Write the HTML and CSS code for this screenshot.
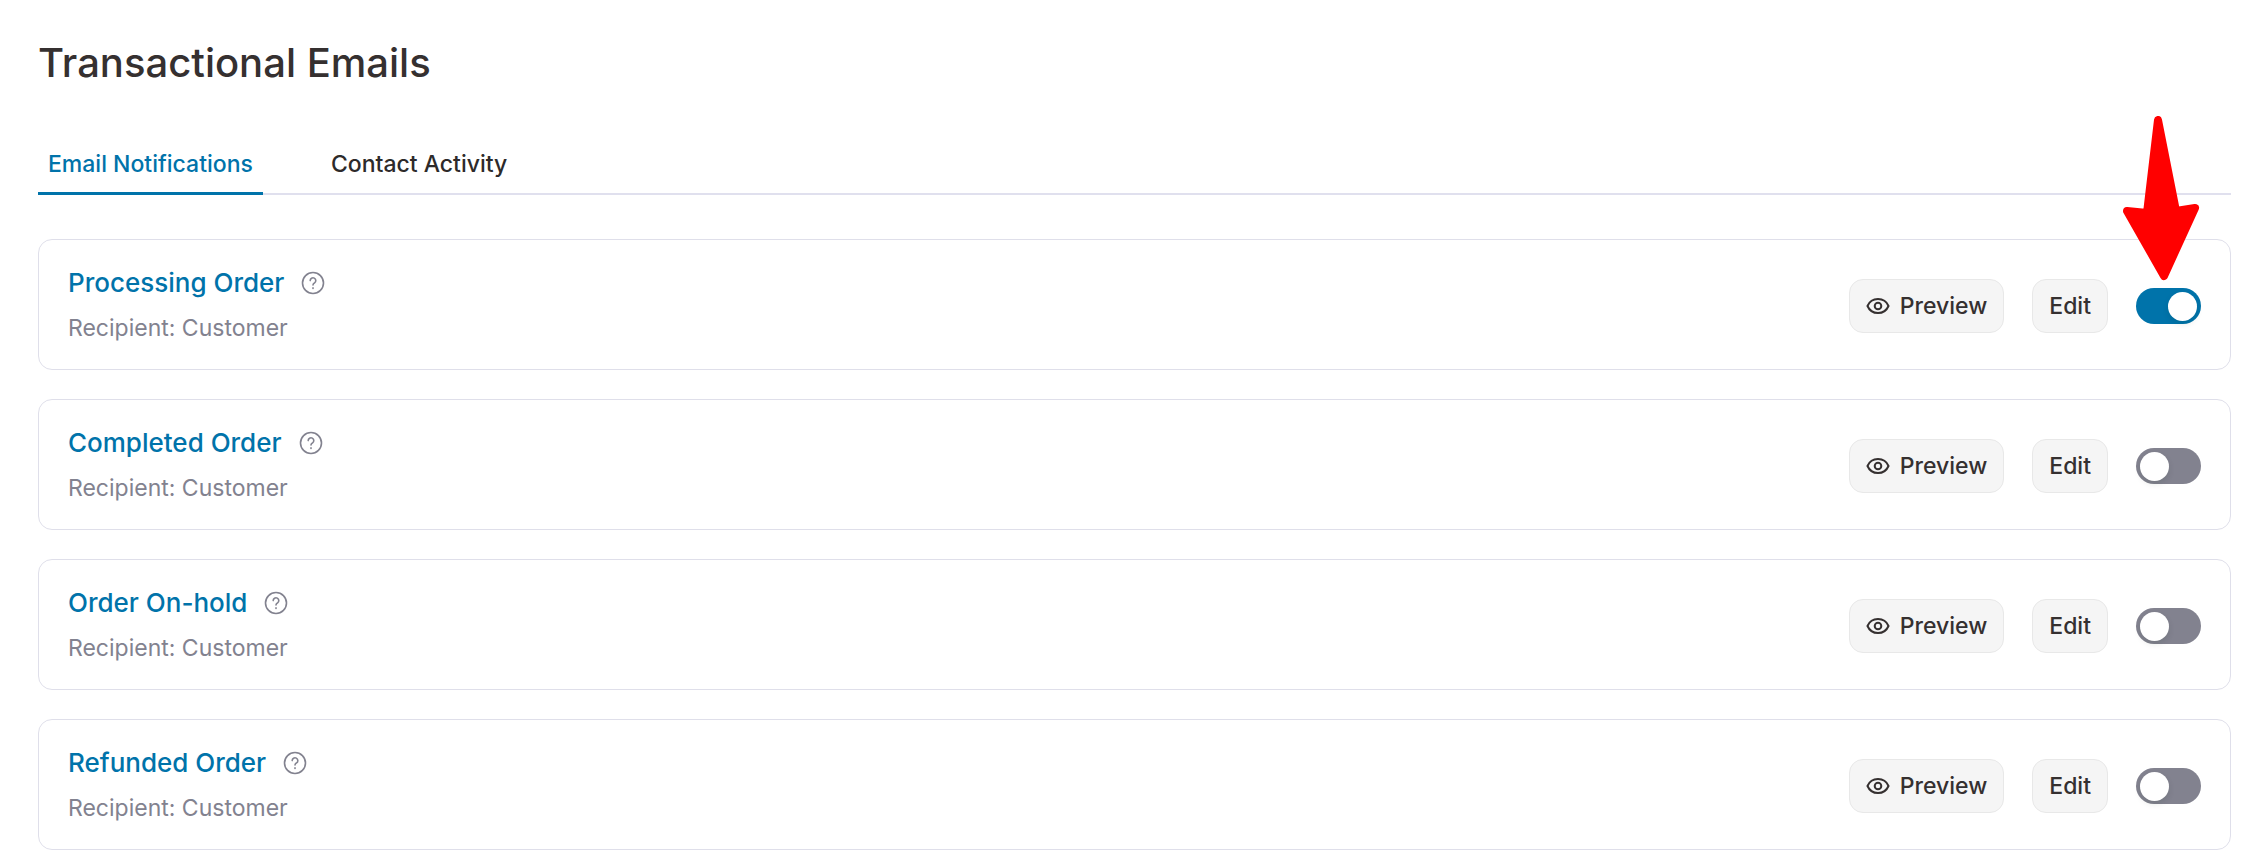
FILE: index.html
```
<!DOCTYPE html>
<html lang="en">

<head>
    <meta charset="UTF-8">
    <meta name="viewport" content="width=device-width, initial-scale=1.0">
    <title>Transactional Emails</title>
    <link rel="stylesheet" href="styles.css">
</head>

<body>
    <!-- shared icons -->
    <svg class="sprite" aria-hidden="true">
        <symbol id="icon-help" viewBox="0 0 24 24">
            <circle cx="12" cy="12" r="10.5" />
            <path d="M9.200 9.600a2.800 2.800 0 1 1 4.400 2.300c-1 .7-1.600 1.100-1.600 2.100" />
            <path d="M12 16.900v.6" />
        </symbol>
        <symbol id="icon-eye" viewBox="0 0 24 24">
            <path d="M1.500 12C3.500 7.300 7.500 5 12 5S20.500 7.300 22.500 12C20.500 16.700 16.500 19 12 19S3.500 16.700 1.500 12z" />
            <circle cx="12" cy="12" r="3.3" />
        </symbol>
    </svg>

    <main class="page">
        <h1 class="title">Transactional Emails</h1>
        <nav class="tabs">
            <a class="tab active" href="#notifications">Email Notifications</a>
            <a class="tab" href="#activity">Contact Activity</a>
        </nav>

        <ul class="list">
            <li class="card">
                <div class="info">
                    <div class="name">
                        <a href="#processing">Processing Order</a>
                        <svg class="help"><use href="#icon-help" /></svg>
                    </div>
                    <p class="recipient">Recipient: Customer</p>
                </div>
                <div class="actions">
                    <button class="btn" type="button"><svg class="eye"><use href="#icon-eye" /></svg>Preview</button>
                    <button class="btn" type="button">Edit</button>
                    <div class="toggle">
                        <input class="switch" type="checkbox" role="switch" aria-label="Processing Order" checked>
                        <svg class="arrow" viewBox="0 0 78 166" aria-hidden="true">
                            <path d="M35 4L24 97L4 95L41 160L72 92L53 95z" />
                        </svg>
                    </div>
                </div>
            </li>
            <li class="card">
                <div class="info">
                    <div class="name">
                        <a href="#completed">Completed Order</a>
                        <svg class="help"><use href="#icon-help" /></svg>
                    </div>
                    <p class="recipient">Recipient: Customer</p>
                </div>
                <div class="actions">
                    <button class="btn" type="button"><svg class="eye"><use href="#icon-eye" /></svg>Preview</button>
                    <button class="btn" type="button">Edit</button>
                    <div class="toggle">
                        <input class="switch" type="checkbox" role="switch" aria-label="Completed Order">
                    </div>
                </div>
            </li>
            <li class="card">
                <div class="info">
                    <div class="name">
                        <a href="#on-hold">Order On-hold</a>
                        <svg class="help"><use href="#icon-help" /></svg>
                    </div>
                    <p class="recipient">Recipient: Customer</p>
                </div>
                <div class="actions">
                    <button class="btn" type="button"><svg class="eye"><use href="#icon-eye" /></svg>Preview</button>
                    <button class="btn" type="button">Edit</button>
                    <div class="toggle">
                        <input class="switch" type="checkbox" role="switch" aria-label="Order On-hold">
                    </div>
                </div>
            </li>
            <li class="card">
                <div class="info">
                    <div class="name">
                        <a href="#refunded">Refunded Order</a>
                        <svg class="help"><use href="#icon-help" /></svg>
                    </div>
                    <p class="recipient">Recipient: Customer</p>
                </div>
                <div class="actions">
                    <button class="btn" type="button"><svg class="eye"><use href="#icon-eye" /></svg>Preview</button>
                    <button class="btn" type="button">Edit</button>
                    <div class="toggle">
                        <input class="switch" type="checkbox" role="switch" aria-label="Refunded Order">
                    </div>
                </div>
            </li>
        </ul>
    </main>
</body>

</html>
```

FILE: styles.css
```
* {
    box-sizing: border-box;
}

body {
    margin: 0;
    background: #fff;
    color: #353030;
    font-family: Inter, "Liberation Sans", sans-serif;
    font-size: 23px;
}

h1,
p,
ul {
    margin: 0;
    padding: 0;
}

a {
    text-decoration: none;
}

.sprite {
    position: absolute;
    width: 0;
    height: 0;
}

.page {
    padding: 36px 35px 0 38px;
}

.title {
    font-size: 40px;
    line-height: 54px;
    font-weight: 500;
}

.tabs {
    display: flex;
    gap: 58px;
    margin-top: 42px;
    border-bottom: 2px solid #e0e0ee;
}

.tab {
    padding: 17px 10px 12px;
    margin-bottom: -2px;
    border-bottom: 3px solid transparent;
    color: #2d2a2a;
    font-weight: 500;
    line-height: 31px;
}

.tab.active {
    color: #0073aa;
    border-color: #0073aa;
}

.list {
    display: flex;
    flex-direction: column;
    gap: 29px;
    margin-top: 44px;
    list-style: none;
}

.card {
    display: flex;
    align-items: center;
    justify-content: space-between;
    padding: 25px 29px 23px;
    border: 1px solid #dfdfea;
    border-radius: 14px;
}

.name {
    display: flex;
    align-items: center;
    gap: 17px;
    font-size: 26px;
    font-weight: 500;
    line-height: 36px;
}

.name a {
    color: #0073aa;
}

.recipient {
    margin-top: 10px;
    color: #82828f;
    line-height: 35px;
}

.help,
.eye {
    width: 24px;
    height: 24px;
    fill: none;
    stroke: #82828f;
    stroke-width: 1.6;
    stroke-linecap: round;
}

.eye {
    stroke: #353030;
    stroke-width: 2;
}

.actions {
    display: flex;
    align-items: center;
    gap: 28px;
}

.btn {
    display: flex;
    align-items: center;
    gap: 10px;
    height: 54px;
    padding: 0 16px;
    border: 1px solid #e8e8e8;
    border-radius: 14px;
    background: #f5f5f5;
    color: #353030;
    font: inherit;
    font-weight: 500;
    cursor: pointer;
}

.toggle {
    position: relative;
    display: flex;
}

.switch {
    appearance: none;
    width: 65px;
    height: 36px;
    margin: 0;
    padding: 4px;
    border-radius: 18px;
    background: #82828f;
    cursor: pointer;
}

.switch::before {
    content: "";
    display: block;
    width: 29px;
    height: 29px;
    border-radius: 50%;
    background: #fff;
    box-shadow: 0 3px 6px rgba(0, 35, 11, 0.1);
}

.switch:checked {
    background: #0073aa;
}

.switch:checked::before {
    margin-left: auto;
}

/* pointer to the enabled switch */
.arrow {
    position: absolute;
    right: 0;
    bottom: 100%;
    width: 78px;
    height: 166px;
    margin-bottom: 6px;
    fill: #f00;
    stroke: #f00;
    stroke-width: 8;
    stroke-linejoin: round;
}
```
